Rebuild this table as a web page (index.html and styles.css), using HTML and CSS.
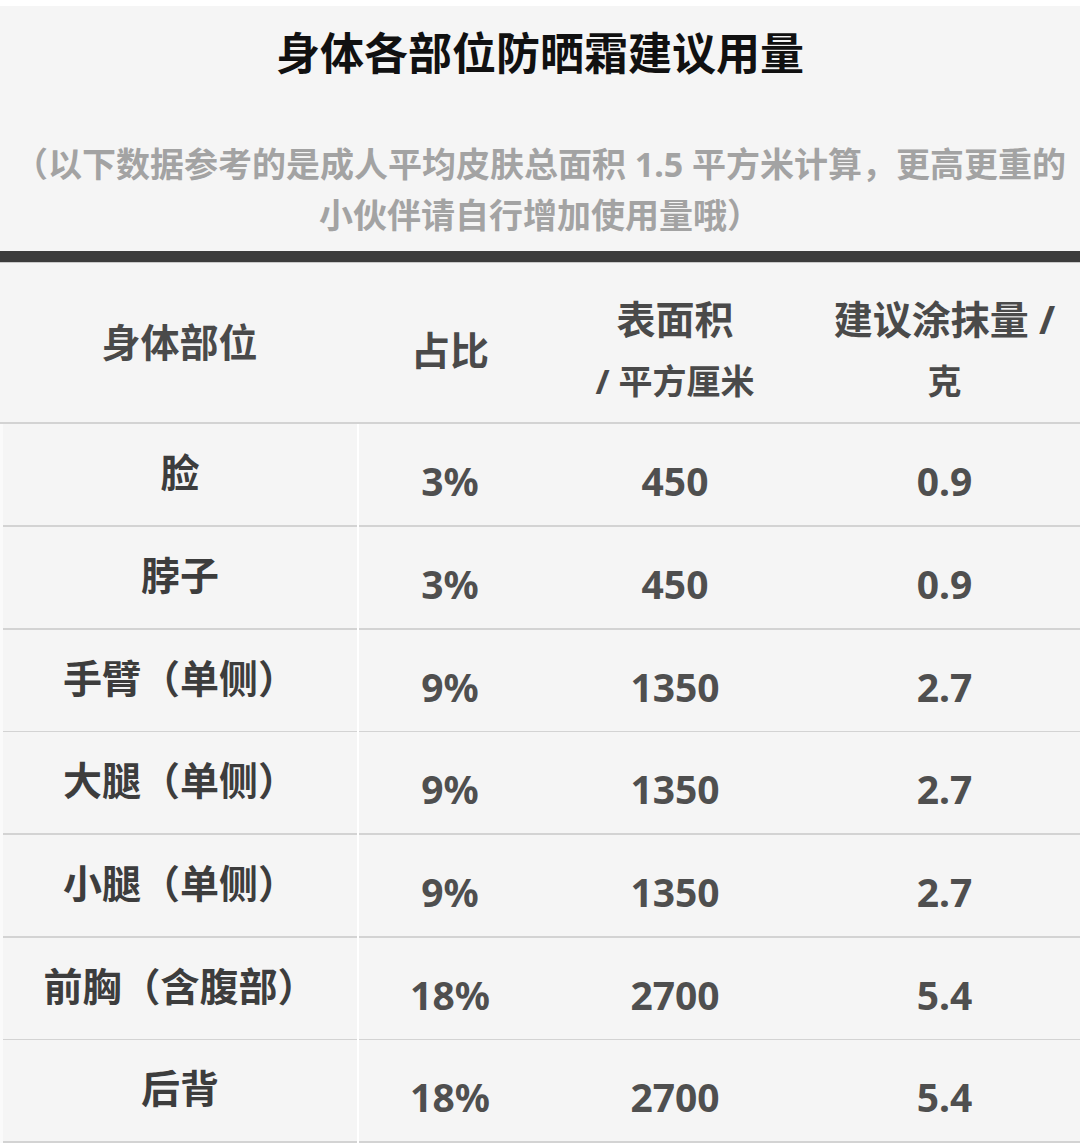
FILE: index.html
```html
<!DOCTYPE html>
<html lang="zh-CN">
<head>
<meta charset="utf-8">
<title>身体各部位防晒霜建议用量</title>
<link rel="stylesheet" href="styles.css">
</head>
<body>
<div class="page">
  <header class="intro">
    <h1 class="title">身体各部位防晒霜建议用量</h1>
    <p class="note">（以下数据参考的是成人平均皮肤总面积 1.5 平方米计算，更高更重的<br>小伙伴请自行增加使用量哦）</p>
  </header>
  <div class="bar"></div>
  <div class="table">
    <div class="head-row">
      <div class="hcell hcell-first">身体部位</div>
      <div class="hcell hcell-single">占比</div>
      <div class="hcell"><div class="hl1">表面积</div><div class="hl2">/ 平方厘米</div></div>
      <div class="hcell"><div class="hl1">建议涂抹量 /</div><div class="hl2">克</div></div>
    </div>
    <div class="row">
      <div class="cell cell-name">脸</div>
      <div class="cell cell-num">3%</div>
      <div class="cell cell-num">450</div>
      <div class="cell cell-num">0.9</div>
    </div>
    <div class="row">
      <div class="cell cell-name">脖子</div>
      <div class="cell cell-num">3%</div>
      <div class="cell cell-num">450</div>
      <div class="cell cell-num">0.9</div>
    </div>
    <div class="row">
      <div class="cell cell-name">手臂（单侧）</div>
      <div class="cell cell-num">9%</div>
      <div class="cell cell-num">1350</div>
      <div class="cell cell-num">2.7</div>
    </div>
    <div class="row">
      <div class="cell cell-name">大腿（单侧）</div>
      <div class="cell cell-num">9%</div>
      <div class="cell cell-num">1350</div>
      <div class="cell cell-num">2.7</div>
    </div>
    <div class="row">
      <div class="cell cell-name">小腿（单侧）</div>
      <div class="cell cell-num">9%</div>
      <div class="cell cell-num">1350</div>
      <div class="cell cell-num">2.7</div>
    </div>
    <div class="row">
      <div class="cell cell-name">前胸（含腹部）</div>
      <div class="cell cell-num">18%</div>
      <div class="cell cell-num">2700</div>
      <div class="cell cell-num">5.4</div>
    </div>
    <div class="row">
      <div class="cell cell-name">后背</div>
      <div class="cell cell-num">18%</div>
      <div class="cell cell-num">2700</div>
      <div class="cell cell-num">5.4</div>
    </div>
  </div>
</div>
</body>
</html>
```

FILE: styles.css
```css
html, body {
  margin: 0;
  padding: 0;
  background: #ffffff;
}

body {
  font-family: "Noto Sans", "Noto Sans CJK SC", sans-serif;
  font-weight: 700;
}

.page {
  margin-top: 6px;
  background: #f5f5f5;
}

.intro {
  text-align: center;
  padding: 17px 0 10px;
  height: 216px;
  box-sizing: border-box;
  margin-bottom: 29px;
}

.title {
  margin: 0;
  font-size: 44px;
  line-height: 60px;
  font-weight: 700;
  color: #111111;
}

.note {
  margin: 56px 0 0;
  font-size: 34px;
  line-height: 51px;
  color: #a3a3a3;
  white-space: nowrap;
}

.bar {
  height: 11px;
  background: #3c3c3c;
  border-bottom: 1px solid #c9c9c9;
}

.head-row,
.row {
  display: grid;
  grid-template-columns: 359px 182px 268px 271px;
}

.head-row {
  height: 159px;
  border-bottom: 2px solid #d3d3d3;
}

.hcell {
  display: flex;
  flex-direction: column;
  align-items: center;
  justify-content: center;
  text-align: center;
  color: #4a4a4a;
  font-size: 39px;
  padding-top: 14px;
  white-space: nowrap;
}

.hcell-first {
  padding-top: 0;
  padding-bottom: 6px;
}

.hcell-single {
  padding-top: 10px;
}

.hl1 {
  font-size: 39px;
  line-height: 63px;
}

.hl2 {
  font-size: 34px;
  line-height: 63px;
}

.row {
  background: linear-gradient(to right, #fafafa 3px, #ffffff 3px);
  padding-left: 3px;
  grid-template-columns: 356px 182px 268px 271px;
}

.row:nth-child(4) .cell,
.row:nth-child(7) .cell {
  margin-bottom: -1px;
}

.cell {
  background: #f5f5f5;
  border-bottom: 2px solid #d3d3d3;
  display: flex;
  align-items: center;
  justify-content: center;
  font-size: 39px;
  white-space: nowrap;
  box-sizing: border-box;
  height: 103px;
}

.cell-name {
  margin-right: 2px;
  color: #3d3d3d;
  padding-bottom: 10px;
}

.cell-num {
  color: #4f4f4f;
  padding-top: 11px;
}
```
